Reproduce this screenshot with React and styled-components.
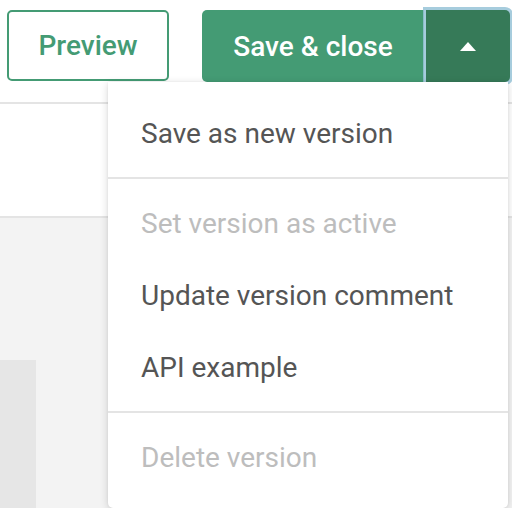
import React from "react";
import styled, { createGlobalStyle } from "styled-components";

const Global = createGlobalStyle`
  html, body { margin: 0; padding: 0; }
  body {
    width: 512px;
    height: 508px;
    overflow: hidden;
    background: #f3f3f3;
    font-family: Roboto, "Noto Sans", sans-serif;
  }
`;

const Page = styled.div`
  position: relative;
  width: 512px;
  height: 508px;
  overflow: hidden;
  background: #f3f3f3;
  display: flex;
  flex-direction: column;
`;

const Header = styled.header`
  flex-shrink: 0;
  height: 104px;
  box-sizing: border-box;
  background: #fff;
  border-bottom: 2px solid #e4e4e4;
  display: flex;
  align-items: flex-start;
  padding: 10px 0 0 7px;
`;

const SubBar = styled.div`
  flex-shrink: 0;
  height: 114px;
  box-sizing: border-box;
  background: #fff;
  border-bottom: 2px solid #e4e4e4;
`;

const Body = styled.div`
  flex: 1;
  display: flex;
  align-items: flex-start;
  padding-top: 142px;
`;

const SideBlock = styled.div`
  width: 36px;
  height: 160px;
  background: #e6e6e6;
`;

const OutlineButton = styled.button`
  width: 162px;
  height: 71px;
  box-sizing: border-box;
  border: 2px solid #449b74;
  border-radius: 5px;
  background: #fff;
  color: #449b74;
  font-family: Roboto, sans-serif;
  font-size: 28px;
  font-weight: 500;
  padding: 0;
  margin-right: 33px;
`;

const SplitGroup = styled.div`
  display: flex;
  position: relative;
`;

const PrimaryButton = styled.button`
  width: 222px;
  height: 72px;
  box-sizing: border-box;
  border: none;
  border-radius: 5px 0 0 5px;
  background: #449b74;
  color: #fff;
  font-family: Roboto, sans-serif;
  font-size: 28px;
  font-weight: 500;
  padding: 0;
`;

const ToggleButton = styled.button`
  width: 84px;
  height: 72px;
  box-sizing: border-box;
  border: none;
  border-radius: 0 5px 5px 0;
  margin-left: 2px;
  background: #367a58;
  box-shadow: 0 0 0 3px rgba(150, 195, 215, 0.85);
  display: flex;
  align-items: center;
  justify-content: center;
  padding: 0;
`;

const Menu = styled.ul`
  position: absolute;
  left: 108px;
  top: 82px;
  width: 400px;
  height: 426px;
  box-sizing: border-box;
  margin: 0;
  padding: 15px 0;
  list-style: none;
  background: #fff;
  border-radius: 0 0 5px 5px;
  box-shadow: 0 2px 8px rgba(0, 0, 0, 0.16), 0 0 2px rgba(0, 0, 0, 0.08);
`;

const Item = styled.li`
  height: 72px;
  display: flex;
  align-items: center;
  padding-left: 33px;
  font-size: 28px;
  color: ${(p) => (p.disabled ? "#bdbdbd" : "#555555")};
`;

const Divider = styled.li`
  height: 2px;
  margin: 8px 0;
  background: #e4e4e4;
`;

export default function App() {
  return (
    <>
      <Global />
      <Page>
        <Header>
          <OutlineButton>Preview</OutlineButton>
          <SplitGroup>
            <PrimaryButton>Save &amp; close</PrimaryButton>
            <ToggleButton aria-label="More">
              <svg width="16" height="9" viewBox="0 0 16 9">
                <path d="M8 0 L16 9 L0 9 Z" fill="#fff" />
              </svg>
            </ToggleButton>
          </SplitGroup>
        </Header>
        <SubBar />
        <Body>
          <SideBlock />
        </Body>
        <Menu>
          <Item>Save as new version</Item>
          <Divider />
          <Item disabled>Set version as active</Item>
          <Item>Update version comment</Item>
          <Item>API example</Item>
          <Divider />
          <Item disabled>Delete version</Item>
        </Menu>
      </Page>
    </>
  );
}
